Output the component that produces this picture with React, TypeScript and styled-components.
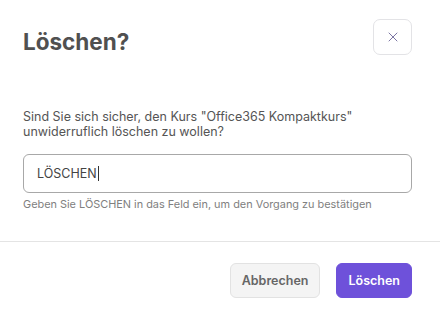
import styled, { createGlobalStyle } from "styled-components";

const GlobalStyle = createGlobalStyle`
  html, body {
    margin: 0;
    padding: 0;
    background: #fff;
  }
  body {
    font-family: Inter, "Noto Sans", "Liberation Sans", sans-serif;
    -webkit-font-smoothing: antialiased;
  }
`

const Dialog = styled.div`
  background: #fff;
  box-sizing: border-box;
  display: flex;
  flex-direction: column;
  height: 311px;
  width: 440px;
`

const Dialog__Header = styled.div`
  align-items: flex-start;
  display: flex;
  justify-content: space-between;
  padding: 19px 28px 0 23px;
`

const Dialog__Title = styled.h2`
  color: #505050;
  font-size: 22.5px;
  font-weight: 700;
  line-height: 27px;
  margin: 8.5px 0 0;
`

const Dialog__Close = styled.button`
  align-items: center;
  background: #fff;
  border: 1px solid #e3e3e6;
  border-radius: 7px;
  box-sizing: border-box;
  display: flex;
  height: 36px;
  justify-content: center;
  padding: 0;
  width: 39px;
`

const Dialog__Body = styled.div`
  display: flex;
  flex-direction: column;
  padding: 54px 28px 0 23px;
`

const Dialog__Text = styled.p`
  color: #555;
  font-size: 12.5px;
  line-height: 15px;
  margin: 0;
`

const Field = styled.div`
  align-items: center;
  border: 1px solid #a8a8a8;
  border-radius: 6px;
  box-sizing: border-box;
  color: #444;
  display: flex;
  font-size: 12.5px;
  height: 39px;
  margin-top: 15px;
  padding: 0 13px;
`

const Field__Caret = styled.span`
  background: #333;
  display: inline-block;
  height: 15px;
  margin-left: 1px;
  width: 1px;
`

const Field__Hint = styled.p`
  color: #808080;
  font-size: 10.9px;
  line-height: 14px;
  margin: 4px 0 0;
`

const Divider = styled.hr`
  border: none;
  border-top: 1px solid #e4e4e4;
  margin: 30px 0 0;
`

const Dialog__Footer = styled.div`
  display: flex;
  gap: 16px;
  justify-content: flex-end;
  padding: 21px 28px 0 23px;
`

const Button = styled.button<{ $primary?: boolean }>`
  background: ${p => (p.$primary ? "#6e51da" : "#f4f4f4")};
  border: 1px solid ${p => (p.$primary ? "#6e51da" : "#e2e2e2")};
  border-radius: 6px;
  box-sizing: border-box;
  color: ${p => (p.$primary ? "#fff" : "#666")};
  font-family: inherit;
  font-size: 12.5px;
  font-weight: 600;
  height: 35px;
  padding: 0 11px;
`

const CloseIcon = () => (
  <svg width="10" height="10" viewBox="0 0 10 10" fill="none">
    <path d="M1 1L9 9M9 1L1 9" stroke="#7c76a3" strokeWidth="1" strokeLinecap="round" />
  </svg>
)

const App = () => {
  return (
    <>
      <GlobalStyle />
      <Dialog>
        <Dialog__Header>
          <Dialog__Title>Löschen?</Dialog__Title>
          <Dialog__Close aria-label="Schließen">
            <CloseIcon />
          </Dialog__Close>
        </Dialog__Header>
        <Dialog__Body>
          <Dialog__Text>
            Sind Sie sich sicher, den Kurs "Office365 Kompaktkurs"
            <br />
            unwiderruflich löschen zu wollen?
          </Dialog__Text>
          <Field role="textbox">
            LÖSCHEN
            <Field__Caret />
          </Field>
          <Field__Hint>Geben Sie LÖSCHEN in das Feld ein, um den Vorgang zu bestätigen</Field__Hint>
        </Dialog__Body>
        <Divider />
        <Dialog__Footer>
          <Button>Abbrechen</Button>
          <Button $primary>Löschen</Button>
        </Dialog__Footer>
      </Dialog>
    </>
  )
}

export default App
